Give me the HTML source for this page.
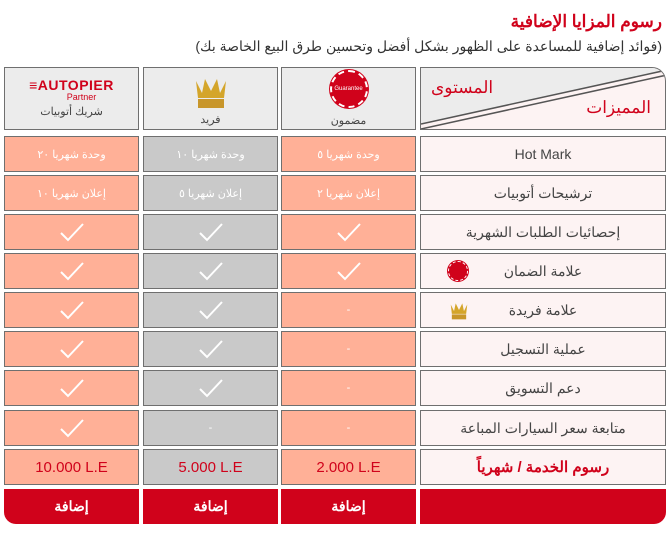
<!DOCTYPE html>
<html><head><meta charset="utf-8"><style>
body{margin:0;width:670px;height:533px;background:#fff;font-family:"Liberation Sans","Noto Sans CJK SC",sans-serif;position:relative;overflow:hidden}
.a{position:absolute;box-sizing:border-box}
.c{border:1.5px solid #6f6f6f;display:flex;align-items:center;justify-content:center;font-size:11px;color:#fff}
.s{background:#ffb097}.g{background:#c9c9c9}.f{background:#fdf3f3;color:#444;font-size:14px}
.t{font-size:17px;color:#d0021b;font-weight:bold;right:8px;top:12px;direction:rtl}
.st{font-size:14px;color:#333;right:8px;top:38px;direction:rtl}
.b{background:#d0021b;color:#fff;font-weight:bold;font-size:14px;display:flex;align-items:center;justify-content:center}
.p{color:#d0021b;font-size:15px}
</style></head><body>
<div class="a t">رسوم المزايا الإضافية</div>
<div class="a st">(فوائد إضافية للمساعدة على الظهور بشكل أفضل وتحسين طرق البيع الخاصة بك)</div>

<div class="a c" style="left:4px;top:67px;width:135px;height:63px;background:#ececec;flex-direction:column;color:#444">
<div style="font-weight:bold;color:#d0021b;font-size:14px;letter-spacing:0.5px;line-height:13px">≡AUTOPIER</div>
<div style="color:#d0021b;font-size:9px;line-height:10px;margin-left:20px">Partner</div>
<div style="font-size:11px;margin-top:3px">شريك أتوبيات</div></div>
<div class="a c" style="left:143px;top:67px;width:135px;height:63px;background:#ececec;flex-direction:column;color:#444">
<svg width="36" height="40" viewBox="0 0 36 40"><path d="M3 10 L9 22 L12 8 L18 20 L24 8 L27 22 L33 10 L31 27 H5Z" fill="#d4a52a"/><rect x="5" y="28" width="26" height="9" fill="#c8962a"/></svg>
<div style="font-size:11px;margin-top:2px">فريد</div></div>
<div class="a c" style="left:281px;top:67px;width:135px;height:63px;background:#ececec;flex-direction:column;color:#444">
<div style="width:34px;height:34px;border-radius:50%;background:#d0021b;border:2px dashed #fff;box-shadow:0 0 0 1px #d0021b;font-size:6px;display:flex;align-items:center;justify-content:center;color:#fff">Guarantee</div>
<div style="font-size:11px;margin-top:6px">مضمون</div></div>
<div class="a" style="left:420px;top:67px;width:246px;height:63px;background:#fdf3f3;border:1.5px solid #6f6f6f;border-radius:0 14px 0 0;overflow:hidden">
<svg class="a" style="left:0;top:0" width="246" height="63"><polygon points="0,0 246,0 246,2 0,56" fill="#ececec"/><line x1="0" y1="56" x2="246" y2="2" stroke="#555" stroke-width="1.5"/><line x1="0" y1="61" x2="246" y2="7" stroke="#555" stroke-width="1.5"/></svg>
<div class="a" style="left:10px;top:10px;color:#d0021b;font-size:17px">المستوى</div>
<div class="a" style="right:14px;top:30px;color:#d0021b;font-size:17px">المميزات</div></div>

<div id="rows"></div>
<script>
var rows=[["Hot Mark","وحدة شهريا ٥","وحدة شهريا ١٠","وحدة شهريا ٢٠"],
["ترشيحات أتوبيات","إعلان شهريا ٢","إعلان شهريا ٥","إعلان شهريا ١٠"],
["إحصائيات الطلبات الشهرية","v","v","v"],
["علامة الضمان","v","v","v"],
["علامة فريدة","-","v","v"],
["عملية التسجيل","-","v","v"],
["دعم التسويق","-","v","v"],
["متابعة سعر السيارات المباعة","-","-","v"]];
var tops=[136,175,214,253,292,331,370,410];
var chk='<svg width="26" height="20" viewBox="0 0 26 20"><path d="M2 11 L9 18 L24 2" fill="none" stroke="#fff" stroke-width="2"/></svg>';
var h='';
function cell(x,w,cls,y,t){return '<div class="a c '+cls+'" style="left:'+x+'px;top:'+y+'px;width:'+w+'px;height:36px">'+t+'</div>';}
rows.forEach(function(r,i){var y=tops[i];
h+=cell(420,246,'f',y,r[0]);
h+=cell(281,135,'s',y,r[1]=='v'?chk:r[1]);
h+=cell(143,135,'g',y,r[2]=='v'?chk:r[2]);
h+=cell(4,135,'s',y,r[3]=='v'?chk:r[3]);});
h+=cell(420,246,'f',449,'<b style="color:#d0021b;font-size:15px">رسوم الخدمة / شهرياً</b>');
h+=cell(281,135,'s p',449,'2.000 L.E');
h+=cell(143,135,'g p',449,'5.000 L.E');
h+=cell(4,135,'s p',449,'10.000 L.E');
document.getElementById('rows').innerHTML=h;
</script>
<div class="a" style="left:448px;top:261px;width:20px;height:20px;border-radius:50%;background:#d0021b;border:1px dashed #fff;box-shadow:0 0 0 1px #d0021b"></div>
<svg class="a" style="left:449px;top:299px" width="20" height="22" viewBox="0 0 36 40"><path d="M3 10 L9 22 L12 8 L18 20 L24 8 L27 22 L33 10 L31 27 H5Z" fill="#d4a52a"/><rect x="5" y="28" width="26" height="9" fill="#c8962a"/></svg>
<div class="a b" style="left:4px;top:489px;width:135px;height:35px;border-radius:0 0 0 12px">إضافة</div>
<div class="a b" style="left:143px;top:489px;width:135px;height:35px">إضافة</div>
<div class="a b" style="left:281px;top:489px;width:135px;height:35px">إضافة</div>
<div class="a b" style="left:420px;top:489px;width:246px;height:35px;border-radius:0 0 12px 0"></div>
</body></html>
